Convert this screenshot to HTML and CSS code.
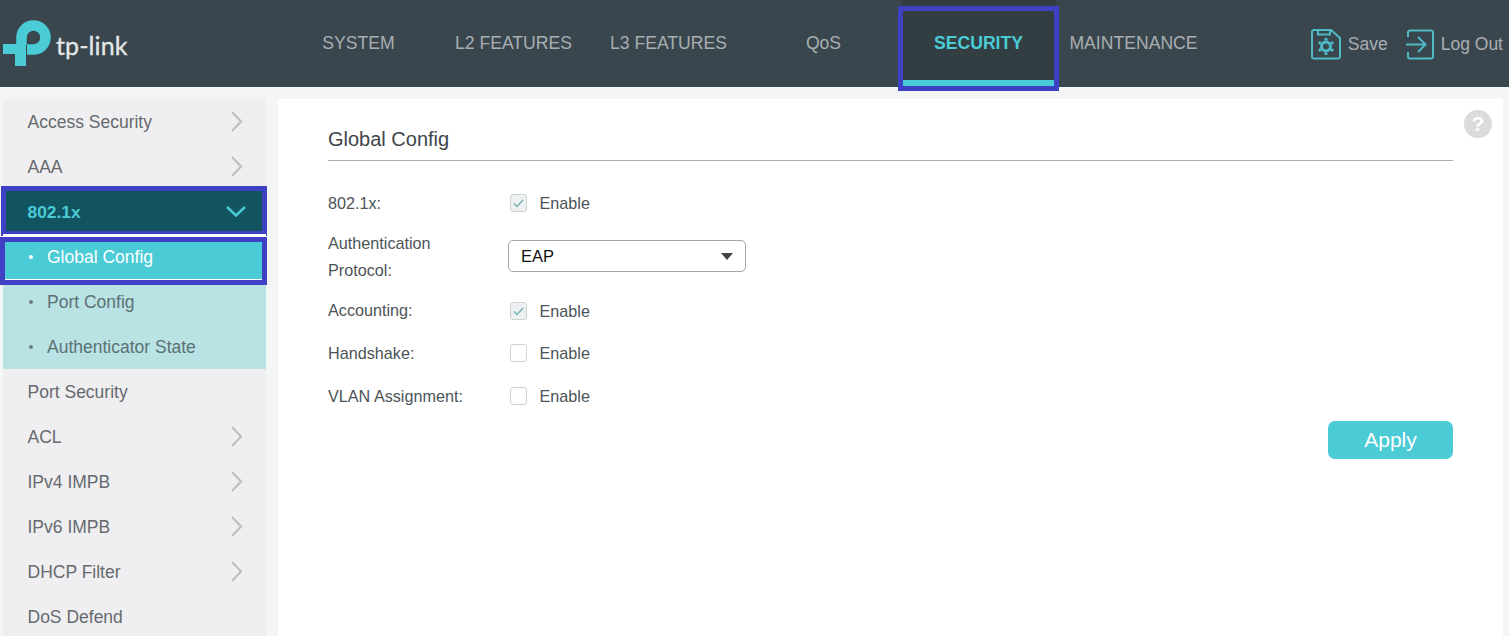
FILE: index.html
```html
<!DOCTYPE html>
<html lang="en">
<head>
<meta charset="utf-8">
<title>Global Config</title>
<link rel="stylesheet" href="styles.css">
</head>
<body>
<header class="header">
  <div class="brand">
    <svg class="brand-mark" width="52" height="50" viewBox="0 0 52 50">
      <path class="mark-stroke" d="M21.500 26 V18.500 A12 12 0 1 1 33.500 30.500 H27"/>
      <path class="mark-fill" d="M3 25 H26 V47 H15 V35 H3 Z"/>
    </svg>
    <span class="brand-name">tp-link</span>
  </div>
  <nav class="nav">
    <a class="tab">SYSTEM</a>
    <a class="tab">L2 FEATURES</a>
    <a class="tab">L3 FEATURES</a>
    <a class="tab">QoS</a>
    <a class="tab tab-active">SECURITY</a>
    <a class="tab">MAINTENANCE</a>
  </nav>
  <div class="actions">
    <a class="action">
      <svg width="30" height="31" viewBox="0 0 30 31" class="action-icon">
        <path d="M3 1 H20 L29 9 V27 A2 2 0 0 1 27 29.500 H3 A2 2 0 0 1 1 27 V3 A2 2 0 0 1 3 1 Z"/>
        <path d="M7 1 V5.500 H19 V1"/>
        <circle class="gear" cx="15" cy="17.500" r="4.500"/>
        <path class="gear" d="M15 9 V11.500 M15 23.500 V26 M7.640 13.250 L9.800 14.500 M20.200 20.500 L22.360 21.750 M7.640 21.750 L9.800 20.500 M20.200 14.500 L22.360 13.250"/>
      </svg>
      <span>Save</span>
    </a>
    <a class="action">
      <svg width="28" height="31" viewBox="0 0 28 31" class="action-icon">
        <path d="M2 8 V3 A2 2 0 0 1 4 1.500 H25 A2 2 0 0 1 27 3 V28 A2 2 0 0 1 25 29.500 H4 A2 2 0 0 1 2 28 V23"/>
        <path d="M0 15.500 H19 M12 8 L19.500 15.500 L12 23"/>
      </svg>
      <span>Log Out</span>
    </a>
  </div>
</header>
<div class="page">
  <aside class="sidebar">
    <a class="item">Access Security<svg class="chev" width="11" height="21" viewBox="0 0 11 21"><path d="M1 1 L10 10.500 L1 20"/></svg></a>
    <a class="item">AAA<svg class="chev" width="11" height="21" viewBox="0 0 11 21"><path d="M1 1 L10 10.500 L1 20"/></svg></a>
    <a class="item item-open">802.1x<svg class="chev-down" width="20" height="11" viewBox="0 0 20 11"><path d="M1 1 L10 9.500 L19 1"/></svg></a>
    <div class="submenu">
      <a class="sub sub-active">Global Config</a>
      <a class="sub">Port Config</a>
      <a class="sub sub-last">Authenticator State</a>
    </div>
    <a class="item">Port Security</a>
    <a class="item">ACL<svg class="chev" width="11" height="21" viewBox="0 0 11 21"><path d="M1 1 L10 10.500 L1 20"/></svg></a>
    <a class="item">IPv4 IMPB<svg class="chev" width="11" height="21" viewBox="0 0 11 21"><path d="M1 1 L10 10.500 L1 20"/></svg></a>
    <a class="item">IPv6 IMPB<svg class="chev" width="11" height="21" viewBox="0 0 11 21"><path d="M1 1 L10 10.500 L1 20"/></svg></a>
    <a class="item">DHCP Filter<svg class="chev" width="11" height="21" viewBox="0 0 11 21"><path d="M1 1 L10 10.500 L1 20"/></svg></a>
    <a class="item">DoS Defend</a>
  </aside>
  <main class="main">
    <span class="help">?</span>
    <h1 class="title">Global Config</h1>
    <form class="form">
      <div class="row">
        <span class="label">802.1x:</span>
        <span class="check is-on"><svg width="11" height="9" viewBox="0 0 11 9"><path d="M1 4.500 L4 7.500 L10 1"/></svg></span>
        <span class="enable">Enable</span>
      </div>
      <div class="row row-tall">
        <span class="label label-two-line">Authentication<br>Protocol:</span>
        <div class="select"><span>EAP</span><i class="caret"></i></div>
      </div>
      <div class="row">
        <span class="label label-raised">Accounting:</span>
        <span class="check is-on"><svg width="11" height="9" viewBox="0 0 11 9"><path d="M1 4.500 L4 7.500 L10 1"/></svg></span>
        <span class="enable">Enable</span>
      </div>
      <div class="row">
        <span class="label">Handshake:</span>
        <span class="check"></span>
        <span class="enable">Enable</span>
      </div>
      <div class="row row-last">
        <span class="label">VLAN Assignment:</span>
        <span class="check"></span>
        <span class="enable">Enable</span>
      </div>
      <div class="form-foot">
        <button type="button" class="apply">Apply</button>
      </div>
    </form>
  </main>
</div>
</body>
</html>
```
FILE: styles.css
```css
* { box-sizing: border-box; }
html, body { height: 100%; }
body {
  margin: 0;
  overflow: hidden;
  background: #f4f5f5;
  font-family: "Liberation Sans", Arial, sans-serif;
  display: flex;
  flex-direction: column;
}
.header {
  height: 87px;
  flex: none;
  background: #3a464e;
  display: flex;
  align-items: stretch;
  position: relative;
  z-index: 2;
}
.brand {
  width: 281px;
  flex: none;
  display: flex;
  align-items: flex-start;
  padding-top: 19px;
}
.brand-mark { flex: none; margin-right: 4px; }
.mark-stroke { fill: none; stroke: #4acbd6; stroke-width: 10.500; }
.mark-fill { fill: #4acbd6; }
.brand-name {
  font-family: Lato, sans-serif;
  font-size: 25px;
  line-height: 30px;
  margin-top: 11px;
  color: #e4e8e9;
  letter-spacing: 0.100px;
  -webkit-text-stroke: 0.300px #e4e8e9;
}
.nav { display: flex; }
.tab {
  width: 155px;
  padding-top: 32px;
  font-size: 17.600px;
  line-height: 22px;
  color: #a9aeb1;
  text-align: center;
  white-space: nowrap;
  position: relative;
}
.tab-active {
  margin-bottom: 1px;
  background: #323e42;
  border-bottom: 6px solid #4acbd6;
  color: #4acbd6;
  font-weight: 700;
}
.tab-active::after {
  content: "";
  position: absolute;
  top: 6px;
  left: -3px;
  right: -3px;
  bottom: -11px;
  border: 5px solid #3e41c4;
}
.actions {
  margin-left: auto;
  padding: 29px 6px 0 0;
  display: flex;
  gap: 18px;
}
.action {
  display: flex;
  align-items: flex-start;
  gap: 7px;
  font-size: 17.500px;
  line-height: 30px;
  color: #a9aeb1;
}
.action-icon { flex: none; fill: none; stroke: #4fb9c6; stroke-width: 2; }
.action-icon .gear { stroke-width: 3; }
.page {
  flex: 1;
  min-height: 0;
  display: flex;
  gap: 12px;
  padding: 12px 6px 0 3px;
}
.sidebar {
  width: 263px;
  flex: none;
  background: #efeff1;
}
.item {
  height: 45px;
  padding: 2px 24px 0 24.500px;
  display: flex;
  align-items: center;
  justify-content: space-between;
  font-size: 17.500px;
  color: #666a6e;
  position: relative;
}
.chev { fill: none; stroke: #bcbdbe; stroke-width: 2; margin-top: -2px; }
.chev-down { fill: none; stroke: #4acbd6; stroke-width: 2.500; margin-top: -2px; margin-right: -4px; }
.item-open {
  background: #11545f;
  color: #4acbd6;
  font-weight: 700;
  font-size: 17.400px;
}
.item-open::after {
  content: "";
  position: absolute;
  top: -3px;
  left: -2px;
  right: -1px;
  bottom: -2px;
  border: 5px solid #3e41c4;
}
.submenu { background: #b8e2e3; }
.sub {
  height: 44px;
  display: flex;
  align-items: center;
  gap: 14px;
  padding-left: 26px;
  font-size: 17.500px;
  color: #5c7174;
  position: relative;
}
.sub::before {
  content: "";
  width: 4px;
  height: 4px;
  border-radius: 50%;
  background: #6a7f82;
  flex: none;
}
.sub-last { height: 45px; padding-top: 1px; }
.sub-active {
  height: 46px;
  background: #4acbd6;
  border-top: 3px solid #fff;
  border-bottom: 1px solid #fff;
  padding-bottom: 2px;
  color: #fff;
}
.sub-active::before { background: #fff; }
.sub-active::after {
  content: "";
  position: absolute;
  top: 0;
  left: -3px;
  right: -1px;
  bottom: -6px;
  border: 5px solid #3e41c4;
}
.main {
  flex: 1;
  min-width: 0;
  background: #fff;
  padding: 25px 50px 0;
  position: relative;
}
.help {
  position: absolute;
  top: 11px;
  right: 11px;
  width: 28px;
  height: 28px;
  border-radius: 50%;
  background: #dadbdc;
  color: #fff;
  font-size: 21px;
  font-weight: 700;
  line-height: 28px;
  text-align: center;
}
.title {
  margin: 0;
  height: 37px;
  border-bottom: 1px solid #a9adb0;
  font-size: 20px;
  font-weight: 400;
  line-height: 30px;
  color: #3e4548;
}
.form { padding-top: 21px; }
.row {
  height: 42px;
  display: flex;
  align-items: center;
  font-size: 16.200px;
  color: #4c5458;
}
.row-tall { height: 54px; margin: 5px 0 7px; }
.row-last { margin-top: 1px; }
.label { width: 180px; flex: none; line-height: 27px; color: #4c5458; }
.label-two-line { margin-top: 2px; }
.label-raised { margin-top: -2px; }
.check {
  width: 17.500px;
  height: 18px;
  margin-left: 1.500px;
  margin-right: 12.500px;
  border: 1px solid #cfd2d3;
  border-radius: 3px;
  background: #fff;
  display: flex;
  align-items: center;
  justify-content: center;
}
.check.is-on { background: #eef1f1; }
.check svg { fill: none; stroke: #6fb0b5; stroke-width: 1.300; }
.enable { color: #4c5458; }
.select {
  width: 238px;
  height: 32px;
  padding: 0 12px;
  display: flex;
  align-items: center;
  justify-content: space-between;
  border: 1px solid #a3a5a7;
  border-radius: 5px;
  font-size: 16.500px;
  color: #111;
}
.caret {
  width: 0;
  height: 0;
  border-left: 6.500px solid transparent;
  border-right: 6.500px solid transparent;
  border-top: 7px solid #3e4448;
}
.form-foot { display: flex; justify-content: flex-end; padding-top: 4px; }
.apply {
  width: 125px;
  height: 38px;
  padding: 0;
  border: 0;
  border-radius: 7px;
  background: #4acbd6;
  color: #fff;
  font-family: inherit;
  font-size: 21px;
}
```
